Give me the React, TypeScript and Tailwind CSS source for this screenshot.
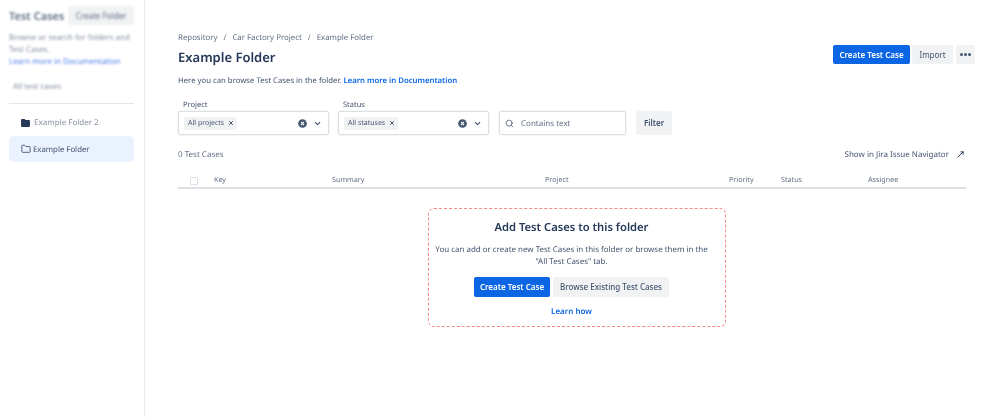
import { ChevronDown, Folder, MoveUpRight, Search, X } from "lucide-react";

function ClearIcon() {
  return (
    <svg width="9" height="9" viewBox="0 0 10 10" className="shrink-0">
      <circle cx="5" cy="5" r="4.8" fill="#44546f" />
      <path d="M3.3 3.3l3.4 3.4M6.7 3.3L3.3 6.7" stroke="#fff" strokeWidth="1.2" />
    </svg>
  );
}

function SelectFilter({ label, value }: { label: string; value: string }) {
  return (
    <div className="flex w-[151px] flex-col">
      <label className="mb-[1px] h-[13px] pl-[5px] text-[7.5px] leading-[16px] text-[#44546f]">{label}</label>
      <div className="flex h-[24px] items-center rounded-[2px] border border-[#dcdfe4] pl-[5px] pr-[6px] shadow-[0_0_0_0.5px_#eceef1]">
        <span className="flex h-[13px] items-center gap-[4px] rounded-[2px] bg-[#f1f2f4] pl-[4px] pr-[3px] text-[7px] text-[#44546f]">
          <span className="pt-[2px]">{value}</span>
          <X size={6} strokeWidth={4} className="text-[#44546f]" />
        </span>
        <span className="ml-auto flex items-center gap-[6px]">
          <ClearIcon />
          <ChevronDown size={9} strokeWidth={3} className="text-[#44546f]" />
        </span>
      </div>
    </div>
  );
}

function Sidebar() {
  return (
    <aside className="flex w-[145px] shrink-0 flex-col border-r border-[#e7e9ec] pl-[9px] pr-[10px] pt-[6px]">
      <div className="blur-[1px]">
        <div className="flex items-center justify-between">
          <h2 className="pt-[3px] text-[11px] font-semibold text-[#626f86]">Test Cases</h2>
          <button className="h-[19px] w-[66px] rounded-[2px] bg-[#f1f2f4] pt-[1px] text-[8px] text-[#626f86]">Create Folder</button>
        </div>
        <p className="mt-[6px] text-[7.9px] leading-[12px] text-[#8590a2]">
          Browse or search for folders and Test Cases.
          <br />
          <a className="text-[#4c7fe8]">Learn more in Documentation</a>
        </p>
        <p className="mt-[13px] pl-[4px] text-[8px] leading-[12px] text-[#8590a2]">All test cases</p>
      </div>
      <div className="mt-[10px] h-px bg-[#e4e6ea]" />
      <div className="flex h-[32px] items-center gap-[4px] pl-[12px] pt-[7px] text-[8px] text-[#8590a2] blur-[0.7px]">
        <svg width="9" height="8" viewBox="0 0 10 9">
          <path d="M0 1a1 1 0 0 1 1-1h3l1 1h4a1 1 0 0 1 1 1v6a1 1 0 0 1-1 1H1a1 1 0 0 1-1-1z" fill="#253858" />
        </svg>
        Example Folder 2
      </div>
      <div className="flex h-[26px] items-center gap-[2px] rounded-[5px] bg-[#e9f2fe] pl-[12px] pt-[1px] text-[7.8px] text-[#44546f]">
        <Folder size={10} strokeWidth={1.8} className="text-[#253858]" />
        <span className="pt-[3px]">Example Folder</span>
      </div>
    </aside>
  );
}

function Main() {
  const columns = "grid-cols-[36px_118px_213px_184px_52px_87px_1fr]";
  return (
    <main className="flex min-w-0 flex-1 flex-col pl-[33px] pr-[33px] pt-[32px]">
      <div className="flex items-start justify-between">
        <div>
          <nav className="mt-[1px] flex h-[12px] items-center gap-[6px] text-[7.85px] text-[#626f86]">
            <span>Repository</span>
            <span>/</span>
            <span>Car Factory Project</span>
            <span>/</span>
            <span>Example Folder</span>
          </nav>
          <h1 className="mt-[1px] text-[13px] leading-[22px] font-semibold text-[#253858]">Example Folder</h1>
        </div>
        <div className="mt-[13px] flex gap-[2px]">
          <button className="h-[19px] w-[77px] rounded-[2px] bg-[#0c66e4] text-[8px] font-semibold text-white">Create Test Case</button>
          <button className="h-[19px] w-[41px] rounded-[2px] bg-[#f1f2f4] text-[8px] text-[#44546f]">Import</button>
          <button className="ml-[1px] mr-[-9px] flex h-[19px] w-[19px] items-center justify-center gap-[1.5px] rounded-[2px] bg-[#f1f2f4]">
            <span className="size-[2.5px] rounded-full bg-[#44546f]" />
            <span className="size-[2.5px] rounded-full bg-[#44546f]" />
            <span className="size-[2.5px] rounded-full bg-[#44546f]" />
          </button>
        </div>
      </div>

      <p className="mt-[6px] h-[14px] text-[7.75px] leading-[14px] text-[#44546f]">
        Here you can browse Test Cases in the folder. <a className="font-semibold text-[#0c66e4]">Learn more in Documentation</a>
      </p>

      <div className="mt-[9px] flex items-end">
        <SelectFilter label="Project" value="All projects" />
        <div className="w-[9px]" />
        <SelectFilter label="Status" value="All statuses" />
        <div className="ml-[10px] flex h-[24px] w-[127px] items-center gap-[7px] rounded-[2px] border border-[#dcdfe4] pl-[5px] text-[8px] text-[#626f86] shadow-[0_0_0_0.5px_#eceef1]">
          <Search size={9} strokeWidth={2} className="text-[#44546f]" />
          <span className="pt-[1px]">Contains text</span>
        </div>
        <button className="ml-[10px] h-[24px] w-[36px] rounded-[2px] bg-[#f1f2f4] text-[8px] font-semibold text-[#44546f]">Filter</button>
      </div>

      <div className="mt-[13px] flex h-[13px] items-center justify-between text-[8px]">
        <span className="text-[#626f86]">0 Test Cases</span>
        <span className="flex items-center gap-[7px] text-[8px] text-[#44546f]">
          Show in Jira Issue Navigator
          <MoveUpRight size={9} strokeWidth={2.6} className="mr-[1px] text-[#253858]" />
        </span>
      </div>

      <div className={`mt-[8px] grid h-[20px] items-center border-b-2 border-[#dcdfe4] pt-[5px] text-[7.2px] text-[#626f86] ${columns}`}>
        <span className="ml-[12px] size-[8px] rounded-[1px] border border-[#dcdfe4]" />
        <span>Key</span>
        <span>Summary</span>
        <span>Project</span>
        <span>Priority</span>
        <span>Status</span>
        <span>Assignee</span>
      </div>

      <section className="ml-[9px] mt-[19px] flex h-[119px] w-[298px] flex-col items-center self-center rounded-[6px] border-[1.5px] border-dashed border-[#f58a8a] pr-[10px] pt-[10px]">
        <h2 className="text-[11.2px] leading-[17px] font-semibold text-[#253858]">Add Test Cases to this folder</h2>
        <p className="mt-[8px] w-[285px] text-center text-[7.95px] leading-[12px] text-[#44546f]">
          You can add or create new Test Cases in this folder or browse them in the "All Test Cases" tab.
        </p>
        <div className="mt-[9px] flex gap-[3px]">
          <button className="h-[20px] w-[76px] rounded-[2px] bg-[#0c66e4] text-[8px] font-semibold text-white">Create Test Case</button>
          <button className="h-[20px] w-[116px] rounded-[2px] bg-[#f1f2f4] text-[8px] font-medium text-[#44546f]">Browse Existing Test Cases</button>
        </div>
        <a className="mt-[9px] text-[8px] leading-[12px] font-semibold text-[#0c66e4]">Learn how</a>
      </section>
    </main>
  );
}

export default function App() {
  return (
    <div className="flex h-[417px] w-[999px] overflow-hidden bg-white font-['Noto_Sans','Open_Sans',sans-serif] blur-[0.25px] [text-rendering:geometricPrecision]">
      <Sidebar />
      <Main />
    </div>
  );
}
